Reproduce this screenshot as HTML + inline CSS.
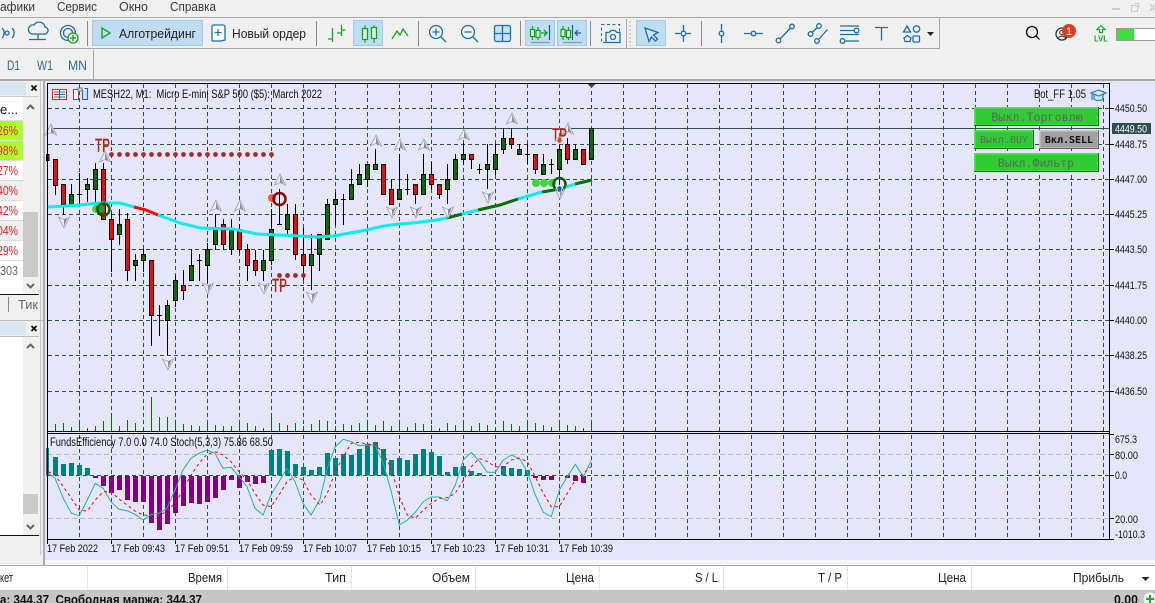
<!DOCTYPE html>
<html><head><meta charset="utf-8"><style>
html,body{margin:0;padding:0;width:1155px;height:603px;overflow:hidden;background:#f0f0f0}
svg{display:block;font-family:"Liberation Sans",sans-serif}
text{white-space:pre}
.m{font-size:13px;fill:#3a3a3a}
.a{font-size:11px;fill:#111}
.t{font-size:11px;fill:#111}
.h{font-size:13px;fill:#222;text-anchor:end}
.r{font-size:13px;fill:#f02020}
.tp{font-weight:bold;font-size:19px;fill:#a52a2a;stroke:#e8d8a8;stroke-width:.3px}
.b{font-family:"DejaVu Sans Mono",monospace;fill:#5c6a5c;text-anchor:middle}
.ic{fill:none;stroke:#1c6fa8;stroke-width:1.3}
</style></head><body>
<svg width="1155" height="603" viewBox="0 0 1155 603" xmlns="http://www.w3.org/2000/svg">
<defs>
<g id="au"><path d="M0-6L5.500 5 0 2.500-5.500 5Z" fill="#eeeef6" stroke="#a8a8b2" stroke-width=".9"/><path d="M0-4V2.500L3.500 3.800Z" fill="#8a8a94"/></g>
<g id="ad"><path d="M0 6L5.500-5 0-2.500-5.500-5Z" fill="#eeeef6" stroke="#a8a8b2" stroke-width=".9"/><path d="M0 4V-2.500L3.500-3.800Z" fill="#8a8a94"/></g>
</defs>
<rect width="1155" height="603" fill="#f0f0f0"/>

<!-- menu -->
<text class="m" x="0" y="11" textLength="35" lengthAdjust="spacingAndGlyphs">афики</text>
<text class="m" x="57" y="11" textLength="40" lengthAdjust="spacingAndGlyphs">Сервис</text>
<text class="m" x="119" y="11" textLength="29" lengthAdjust="spacingAndGlyphs">Окно</text>
<text class="m" x="170" y="11" textLength="46" lengthAdjust="spacingAndGlyphs">Справка</text>
<path d="M1112 9h8" stroke="#ccc" stroke-width="2"/>
<path d="M1131.500 5.500h6v6h-6zM1134 3.500h5v5" fill="none" stroke="#ccc"/>
<path d="M1150 4l5 7m0-7l-5 7" stroke="#ccc" stroke-width="1.500"/>
<rect x="0" y="17" width="1155" height="1" fill="#a8a8a8"/>
<rect x="0" y="48" width="939" height="1" fill="#a8a8a8"/>
<rect x="939" y="18" width="1" height="31" fill="#a8a8a8"/>

<!-- toolbar left -->
<g class="ic">
<path d="M2 28a7 7 0 0 1 0 10M12 28a7 7 0 0 1 0 10"/><circle cx="7" cy="33" r="2"/>
<path d="M32 34h12a3.500 3.500 0 0 0 1-7 6 6 0 0 0-11-2 4.500 4.500 0 0 0-2 9zM38 34v5M29 39.500h17"/>
<circle cx="68" cy="33" r="7.500"/><circle cx="68" cy="33" r="4.500"/>
</g>
<circle cx="73" cy="38" r="5" fill="#dff5df" stroke="#1a9a2c" stroke-width="1.300"/>
<path d="M70 38h6M73 35v6" stroke="#1a9a2c" stroke-width="1.300"/>
<rect x="87" y="21" width="1" height="25" fill="#8a8a8a"/>
<rect x="92.500" y="20.500" width="110" height="25" fill="#bfdcf3" stroke="#9acbf2"/>
<path d="M102 28l8 5-8 5z" fill="none" stroke="#1aa52c" stroke-width="1.400"/>
<text class="m" x="119" y="38" textLength="77" lengthAdjust="spacingAndGlyphs" style="fill:#222">Алготрейдинг</text>
<path d="M213 25h10a2 2 0 0 1 2 2v13l-4 1h-8a1 1 0 0 1-1-1V26z" fill="#fff" stroke="#1c6fa8" stroke-width="1.300"/>
<path d="M218 29v7M214.500 32.500h7" stroke="#1c6fa8" stroke-width="1.200"/>
<text class="m" x="232" y="38" textLength="74" lengthAdjust="spacingAndGlyphs" style="fill:#222">Новый ордер</text>
<rect x="316" y="21" width="1" height="25" fill="#8a8a8a"/>
<path d="M332.500 28V42M328 39h4.500M341.500 25v11M341.500 30h4M337 33h4" fill="none" stroke="#12a81e" stroke-width="1.300"/>
<rect x="353.500" y="20.500" width="29" height="25" fill="#bfdcf3" stroke="#9acbf2"/>
<path d="M365 25v18M374 25v18" stroke="#0aa51a"/>
<rect x="362.500" y="28.500" width="5" height="11" fill="#dff2e0" stroke="#0aa51a" stroke-width="1.300"/>
<rect x="371.500" y="27.500" width="5" height="11" fill="#dff2e0" stroke="#0aa51a" stroke-width="1.300"/>
<path d="M392 39l5-8 3 4 3-6 5 7" fill="none" stroke="#12a81e" stroke-width="1.300"/>
<rect x="418" y="21" width="1" height="25" fill="#8a8a8a"/>
<g class="ic">
<circle cx="436" cy="32" r="6.500"/><path d="M441 37l5 5M432.500 32h7M436 28.500v7"/>
<circle cx="468" cy="32" r="6.500"/><path d="M473 37l5 5M464.500 32h7"/>
<rect x="494.500" y="25.500" width="16" height="16" rx="2" fill="#c5e2f8"/><path d="M502.500 25.500v16M494.500 33.500h16"/>
</g>
<rect x="520" y="21" width="1" height="25" fill="#8a8a8a"/>
<rect x="525.500" y="20.500" width="29" height="25" fill="#bfdcf3" stroke="#9acbf2"/>
<rect x="557.500" y="20.500" width="29" height="25" fill="#bfdcf3" stroke="#9acbf2"/>
<g fill="none" stroke="#0aa51a" stroke-width="1.200">
<path d="M532.500 26v14M538 27v13M563 26v14M568.500 27v13"/>
<rect x="530.500" y="29.500" width="4" height="7" fill="#dff2e0"/><rect x="536" y="30.500" width="4" height="7" fill="#dff2e0"/>
<rect x="561" y="29.500" width="4" height="7" fill="#dff2e0"/><rect x="566.500" y="30.500" width="4" height="7" fill="#dff2e0"/>
<path d="M541 33h6m-3-3l3 3-3 3" stroke-width="1.300"/>
</g>
<path d="M549.500 25v15M572.500 25v15M581 33h-6m3-3l-3 3 3 3" fill="none" stroke="#1c5c90" stroke-width="1.200"/>
<path d="M531 42.500h19M563 42.500h19" stroke="#8a9aa8" stroke-width="1.200"/>
<rect x="590" y="21" width="1" height="25" fill="#8a8a8a"/>
<rect x="601.500" y="24.500" width="18" height="18" fill="none" stroke="#1c6fa8" stroke-dasharray="3 2.500"/>
<path d="M606 32.500h3l2-2h4l2 2h3v10h-14z" fill="#f0f0f0" stroke="#1c6fa8" stroke-width="1.300"/>
<circle cx="613" cy="37" r="2.500" fill="none" stroke="#1c6fa8" stroke-width="1.300"/>
<rect x="626" y="19" width="1" height="29" fill="#a8a8a8"/>
<path d="M630 21v25" stroke="#ccc" stroke-width="2" stroke-dasharray="2 2"/>
<rect x="636.500" y="20.500" width="29" height="25" fill="#bfdcf3" stroke="#9acbf2"/>
<path d="M645 28l13 4.500-4.500 2.500 4 4-2 2-4-4-2.500 4.500z" fill="#cfe4f6" stroke="#1c6fa8" stroke-width="1.300"/>
<g class="ic">
<path d="M675 33.500h5.500M685.500 33.500h5.500M683.500 25v6M683.500 36v6"/><circle cx="683.500" cy="33.500" r="2.300"/>
<path d="M721.500 24v7M721.500 36v7"/><circle cx="721.500" cy="33.500" r="2.300"/>
<path d="M744 33.500h7M756 33.500h7"/><circle cx="753.500" cy="33.500" r="2.300"/>
<circle cx="778.500" cy="40.500" r="2.300"/><circle cx="792" cy="26.500" r="2.300"/><path d="M780 39l10.500-11"/>
<circle cx="810.500" cy="34" r="2.300"/><circle cx="819" cy="26" r="2.300"/><circle cx="817" cy="41" r="2.300"/>
<path d="M812 32.500l5.500-5M819 39l8.500-9.500"/>
<path d="M840 26h19M840 30.500h14M840 34.500h19M845 41h14"/><circle cx="856.500" cy="30.500" r="2.300"/><circle cx="842.500" cy="41" r="2.300"/>
<path d="M875 27.500h13M881.500 27.500v13"/>
<path d="M907 26l3.500 6h-7z"/><circle cx="916.500" cy="29" r="3.200"/><path d="M904 38l3.500-2.500 3.500 2.500-1 3.500h-5z"/><rect x="913" y="36" width="6.500" height="6" rx="1"/>
</g>
<rect x="701" y="21" width="1" height="25" fill="#8a8a8a"/>
<path d="M927 32h7l-3.500 4z" fill="#222"/>
<!-- right icons -->
<circle cx="1032" cy="32" r="5.500" fill="none" stroke="#111" stroke-width="1.300"/><path d="M1036 36l3.500 3.500" stroke="#111" stroke-width="1.400"/>
<circle cx="1062" cy="34" r="6" fill="none" stroke="#333" stroke-width="1.300"/><circle cx="1062" cy="32.500" r="2.300" fill="none" stroke="#333"/><path d="M1058 38.500c1-3 7-3 8 0" fill="none" stroke="#333"/>
<circle cx="1069" cy="31" r="7" fill="#e5391f"/>
<text x="1069" y="35" font-size="11" fill="#fff" text-anchor="middle">1</text>
<path d="M1101 25.500l4 4h-2.500v3h-3v-3H1097z" fill="#fff" stroke="#15a52c" stroke-width="1.200"/>
<text x="1094" y="41.500" font-size="8" font-weight="bold" fill="#15a52c" textLength="14" lengthAdjust="spacingAndGlyphs">LVL</text>
<rect x="1116.500" y="28.500" width="42" height="12" fill="#fff" stroke="#999"/>
<rect x="1117" y="29" width="17" height="11" fill="#3fdd3f"/>

<!-- period row -->
<g font-size="14" fill="#2a6ea5"><text x="7" y="70" textLength="13" lengthAdjust="spacingAndGlyphs">D1</text><text x="37" y="70" textLength="16" lengthAdjust="spacingAndGlyphs">W1</text><text x="68" y="70" textLength="19" lengthAdjust="spacingAndGlyphs">MN</text></g>
<rect x="93" y="50" width="1" height="30" fill="#a8a8a8"/>

<!-- left panels -->
<rect x="0" y="79" width="1155" height="2" fill="#a8a8a8"/>
<rect x="0" y="81" width="45" height="484" fill="#f0f0f0"/>
<rect x="40" y="81" width="1" height="474" fill="#c4c4c4"/>
<rect x="43" y="81" width="2" height="484" fill="#aaa"/>
<rect x="0" y="82" width="26" height="13" fill="#d9e6f1"/>
<path d="M31.500 85.500l5 5m0-5l-5 5" stroke="#111" stroke-width="1.800"/>
<rect x="0" y="96" width="39" height="1" fill="#ccc"/>
<rect x="0" y="97" width="23" height="197" fill="#fff"/>
<text style="font-size:13px;fill:#111" x="0" y="114">е...</text>
<rect x="0" y="121" width="23" height="19" fill="#adff2f"/>
<rect x="0" y="141" width="23" height="19" fill="#adff2f"/>
<rect x="0" y="181" width="23" height="19" fill="#eee"/>
<rect x="0" y="221" width="23" height="19" fill="#eee"/>
<path d="M0 120.500h23M0 140.500h23M0 160.500h23M0 180.500h23M0 200.500h23M0 220.500h23M0 240.500h23M0 260.500h23" stroke="#ddd"/>
<text class="r" x="-3" y="135" textLength="21" lengthAdjust="spacingAndGlyphs">26%</text><text class="r" x="-3" y="155" textLength="21" lengthAdjust="spacingAndGlyphs">98%</text><text class="r" x="-3" y="175" textLength="21" lengthAdjust="spacingAndGlyphs">27%</text><text class="r" x="-3" y="195" textLength="21" lengthAdjust="spacingAndGlyphs">40%</text><text class="r" x="-3" y="215" textLength="21" lengthAdjust="spacingAndGlyphs">42%</text><text class="r" x="-3" y="235" textLength="21" lengthAdjust="spacingAndGlyphs">04%</text><text class="r" x="-3" y="255" textLength="21" lengthAdjust="spacingAndGlyphs">29%</text>
<text x="0" y="275" style="font-size:13px;fill:#666" textLength="18" lengthAdjust="spacingAndGlyphs">303</text>
<rect x="23" y="212" width="15" height="65" fill="#cacaca"/>
<path d="M27 109l3.500-3.500 3.500 3.500M27 284l3.500 3.500 3.500-3.500" fill="none" stroke="#666" stroke-width="2"/>
<rect x="0" y="294" width="39" height="1" fill="#111"/>
<rect x="8" y="297" width="1" height="15" fill="#888"/>
<text x="18" y="309" style="font-size:13px;fill:#667" textLength="20" lengthAdjust="spacingAndGlyphs">Тик</text>
<rect x="0" y="320" width="43" height="1" fill="#bbb"/>
<rect x="0" y="322" width="26" height="13" fill="#d9e6f1"/>
<path d="M31.500 326l5 5m0-5l-5 5" stroke="#111" stroke-width="1.800"/>
<rect x="0" y="336" width="39" height="1" fill="#bbb"/>
<rect x="0" y="337" width="23" height="198" fill="#fff"/>
<rect x="23" y="494" width="15" height="20" fill="#cacaca"/>
<path d="M27 348l3.500-3.500 3.500 3.500M27 525l3.500 3.500 3.500-3.500" fill="none" stroke="#666" stroke-width="2"/>
<rect x="0" y="535" width="39" height="1" fill="#111"/>

<!-- chart background -->
<rect x="45" y="81" width="1110" height="479" fill="#e6e6fa"/>
<rect x="45" y="560" width="1110" height="5" fill="#f5f5f5"/>

<!-- grid -->
<g fill="none" stroke="#2f4f4f" stroke-dasharray="4 3">
<path d="M48 108.500H1109M48 144.500H1109M48 179.500H1109M48 214.500H1109M48 249.500H1109M48 285.500H1109M48 320.500H1109M48 355.500H1109M48 391.500H1109M48 475.500H1109"/>
<path d="M79.500 84V431M111.500 84V431M143.500 84V431M175.500 84V431M207.500 84V431M239.500 84V431M271.500 84V431M303.500 84V431M335.500 84V431M367.500 84V431M399.500 84V431M431.500 84V431M463.500 84V431M495.500 84V431M527.500 84V431M559.500 84V431M591.500 84V431M623.500 84V431M655.500 84V431M687.500 84V431M719.500 84V431M751.500 84V431M783.500 84V431M815.500 84V431M847.500 84V431M879.500 84V431M911.500 84V431M943.500 84V431M975.500 84V431M1007.500 84V431M1039.500 84V431M1071.500 84V431M1103.500 84V431"/>
<path d="M79.500 435V539M111.500 435V539M143.500 435V539M175.500 435V539M207.500 435V539M239.500 435V539M271.500 435V539M303.500 435V539M335.500 435V539M367.500 435V539M399.500 435V539M431.500 435V539M463.500 435V539M495.500 435V539M527.500 435V539M559.500 435V539M591.500 435V539M623.500 435V539M655.500 435V539M687.500 435V539M719.500 435V539M751.500 435V539M783.500 435V539M815.500 435V539M847.500 435V539M879.500 435V539M911.500 435V539M943.500 435V539M975.500 435V539M1007.500 435V539M1039.500 435V539M1071.500 435V539M1103.500 435V539"/>
</g>
<path d="M48 454.500H1109M48 518.500H1109" stroke="#bcbcbc" stroke-dasharray="5 3" fill="none"/>
<path d="M48 128.500H1109" stroke="#2f4f4f"/>

<!-- volumes -->
<path stroke="#007000" fill="none" d="M55.500 431V424M63.500 431V423M71.500 431V427M79.500 431V424M87.500 431V428M95.500 431V426M103.500 431V421M111.500 431V413M119.500 431V426M127.500 431V420M135.500 431V423M143.500 431V427M151.500 431V397M159.500 431V417M167.500 431V417M175.500 431V420M183.500 431V424M191.500 431V425M199.500 431V426M207.500 431V423M215.500 431V425M223.500 431V426M231.500 431V426M239.500 431V423M247.500 431V423M255.500 431V426M263.500 431V428M271.500 431V417M279.500 431V423M287.500 431V425M295.500 431V423M303.500 431V426M311.500 431V424M319.500 431V420M327.500 431V421M335.500 431V426M343.500 431V424M351.500 431V425M359.500 431V423M367.500 431V421M375.500 431V425M383.500 431V421M391.500 431V426M399.500 431V423M407.500 431V427M415.500 431V423M423.500 431V424M431.500 431V425M439.500 431V428M447.500 431V423M455.500 431V425M463.500 431V421M471.500 431V426M479.500 431V423M487.500 431V425M495.500 431V427M503.500 431V421M511.500 431V424M519.500 431V426M527.500 431V424M535.500 431V423M543.500 431V425M551.500 431V427M559.500 431V421M567.500 431V425M575.500 431V426M583.500 431V428M591.500 431V422"/>

<!-- wicks -->
<path stroke="#000" fill="none" d="M55.500 159V195M63.500 184V215M71.500 184V204M79.500 173V205M77 194.500h5M87.500 178V202M95.500 163V202M103.500 163V220M111.500 213V272M119.500 209V245M127.500 213V281M135.500 254V281M143.500 249V272M151.500 260V346M159.500 305V336M157 315.500h5M167.500 300V355M175.500 275V307M183.500 270V300M191.500 249V280M199.500 254V281M197 260.500h5M207.500 243V283M215.500 214V250M223.500 219V250M231.500 219V255M239.500 224V253M247.500 244V281M255.500 250V276M263.500 250V281M271.500 209V265M279.500 189V224M277 224.500h5M287.500 204V235M295.500 204V260M303.500 228V280M311.500 234V290M319.500 234V271M327.500 199V239M335.500 192V225M343.500 194V225M341 199.500h5M351.500 169V199M359.500 164V184M367.500 164V187M375.500 149V169M391.500 179V204M399.500 154V199M407.500 174V195M405 189.500h5M415.500 184V204M423.500 154V194M431.500 162V189M439.500 184V199M447.500 164V204M455.500 154V179M463.500 143V165M471.500 154V169M479.500 164V174M477 169.500h5M487.500 144V189M495.500 144V175M503.500 128V154M511.500 128V149M519.500 144V154M527.500 144V164M525 154.500h5M535.500 154V174M543.500 154V174M551.500 159V174M549 164.500h5M559.500 144V190M567.500 138V164M575.500 144V159"/>
<!-- green bodies -->
<path fill="#006f00" stroke="#000" d="M69.500 194.500h4v10h-4zM85.500 184.500h4v5h-4zM93.500 169.500h4v20h-4zM117.500 224.500h4v10h-4zM133.500 260.500h4v5h-4zM141.500 254.500h4v6h-4zM165.500 305.500h4v15h-4zM173.500 280.500h4v20h-4zM189.500 265.500h4v15h-4zM205.500 249.500h4v16h-4zM213.500 229.500h4v15h-4zM229.500 229.500h4v20h-4zM261.500 260.500h4v10h-4zM269.500 229.500h4v31h-4zM285.500 214.500h4v15h-4zM309.500 254.500h4v11h-4zM317.500 234.500h4v20h-4zM325.500 204.500h4v35h-4zM333.500 199.500h4v5h-4zM349.500 184.500h4v15h-4zM357.500 174.500h4v10h-4zM365.500 164.500h4v15h-4zM373.500 164.500h4v5h-4zM397.500 189.500h4v10h-4zM421.500 174.500h4v20h-4zM445.500 179.500h4v10h-4zM453.500 159.500h4v20h-4zM461.500 154.500h4v5h-4zM485.500 164.500h4v5h-4zM493.500 154.500h4v15h-4zM501.500 138.500h4v11h-4zM517.500 149.500h4v5h-4zM541.500 164.500h4v10h-4zM557.500 149.500h4v20h-4zM573.500 149.500h4v10h-4zM589.500 128.500h4v31h-4z"/>
<!-- red bodies -->
<path fill="#f00" stroke="#000" d="M46.500 154.500h2.500v6h-2.500zM53.500 159.500h4v26h-4zM61.500 184.500h4v20h-4zM101.500 169.500h4v50h-4zM109.500 219.500h4v20h-4zM125.500 219.500h4v51h-4zM149.500 260.500h4v55h-4zM181.500 285.500h4v5h-4zM221.500 224.500h4v20h-4zM237.500 229.500h4v20h-4zM245.500 249.500h4v16h-4zM253.500 260.500h4v10h-4zM293.500 214.500h4v40h-4zM301.500 254.500h4v11h-4zM381.500 164.500h4v30h-4zM389.500 189.500h4v15h-4zM413.500 184.500h4v10h-4zM429.500 174.500h4v10h-4zM437.500 184.500h4v10h-4zM469.500 154.500h4v5h-4zM509.500 138.500h4v6h-4zM533.500 154.500h4v15h-4zM565.500 144.500h4v15h-4zM581.500 149.500h4v15h-4z"/>

<!-- moving average -->
<g fill="none" stroke-width="3">
<path stroke="#00eeee" d="M48 207L65 206 80 205 100 203 120 203 134 207M158 215L180 223 200 228 233 229 257 234 300 236 317 237 333 236 350 233 367 230 383 226 400 224 417 222.500 433 220.500 447 218M462 214L478 210M518 199L542 192M560 189L575 184"/>
<path stroke="#f00" d="M134 207L146 210 158 215"/>
<path stroke="#007000" d="M447 218L462 214M478 210L500 205 518 199M542 192L560 189M575 184L592 180"/>
</g>

<!-- arrows -->
<use href="#au" x="105" y="157"/><use href="#au" x="216" y="206"/><use href="#au" x="240" y="206"/><use href="#au" x="280" y="180"/><use href="#au" x="51" y="130"/><use href="#au" x="376" y="141"/><use href="#au" x="400" y="145"/><use href="#au" x="424" y="145"/><use href="#au" x="464" y="135"/><use href="#au" x="512" y="119"/><use href="#au" x="568" y="129"/>
<use href="#ad" x="64" y="222"/><use href="#ad" x="208" y="288"/><use href="#ad" x="264" y="288"/><use href="#ad" x="168" y="364"/><use href="#ad" x="312" y="297"/><use href="#ad" x="392" y="212"/><use href="#ad" x="416" y="212"/><use href="#ad" x="448" y="212"/><use href="#ad" x="488" y="197"/><use href="#ad" x="560" y="193"/>

<!-- TP dots -->
<g fill="#a52a2a">
<circle cx="111.500" cy="154.500" r="2.400"/><circle cx="119.500" cy="154.500" r="2.400"/><circle cx="127.500" cy="154.500" r="2.400"/><circle cx="135.500" cy="154.500" r="2.400"/><circle cx="143.500" cy="154.500" r="2.400"/><circle cx="151.500" cy="154.500" r="2.400"/><circle cx="159.500" cy="154.500" r="2.400"/><circle cx="167.500" cy="154.500" r="2.400"/><circle cx="175.500" cy="154.500" r="2.400"/><circle cx="183.500" cy="154.500" r="2.400"/><circle cx="191.500" cy="154.500" r="2.400"/><circle cx="199.500" cy="154.500" r="2.400"/><circle cx="207.500" cy="154.500" r="2.400"/><circle cx="215.500" cy="154.500" r="2.400"/><circle cx="223.500" cy="154.500" r="2.400"/><circle cx="231.500" cy="154.500" r="2.400"/><circle cx="239.500" cy="154.500" r="2.400"/><circle cx="247.500" cy="154.500" r="2.400"/><circle cx="255.500" cy="154.500" r="2.400"/><circle cx="263.500" cy="154.500" r="2.400"/><circle cx="271.500" cy="154.500" r="2.400"/>
<circle cx="279.500" cy="275.500" r="2.400"/><circle cx="287.500" cy="275.500" r="2.400"/><circle cx="295.500" cy="275.500" r="2.400"/><circle cx="303.500" cy="275.500" r="2.400"/>
</g>
<text class="tp" x="95" y="152" textLength="15" lengthAdjust="spacingAndGlyphs">TP</text>
<text class="tp" x="272" y="292" textLength="15" lengthAdjust="spacingAndGlyphs">TP</text>
<text class="tp" x="552" y="141.500" textLength="15" lengthAdjust="spacingAndGlyphs">TP</text>

<!-- entry markers -->
<circle cx="96" cy="209" r="4" fill="#5bd02b"/><circle cx="100" cy="209" r="4.500" fill="#2a9a2a"/>
<circle cx="103.500" cy="209.500" r="6" fill="none" stroke="#0b5c0b" stroke-width="2.500"/>
<circle cx="272" cy="198" r="4" fill="#ff5a30"/>
<circle cx="279.500" cy="199" r="6" fill="none" stroke="#8b0000" stroke-width="2.500"/>
<circle cx="536" cy="183" r="4" fill="#3ed63e"/><circle cx="544" cy="183" r="4" fill="#3ed63e"/><circle cx="552" cy="183" r="4" fill="#3ed63e"/>
<circle cx="559.500" cy="184" r="6" fill="none" stroke="#0b5c0b" stroke-width="2.500"/>
<path d="M559.500 185l4 4h-2v3h-4v-3h-2z" fill="#1560b0" stroke="#fff" stroke-width=".6"/>
<path d="M559.500 144l4-4h-2v-3h-4v3h-2z" fill="#f04020" stroke="#fff" stroke-width=".6"/>

<!-- chart header -->
<g fill="none" stroke-width="1.100">
<rect x="52.500" y="89.500" width="14" height="10" fill="#fff" stroke="#d03030"/><path d="M54 92h5M54 94.500h5M54 97h5" stroke="#d03030"/><path d="M60 92h5M60 94.500h5M60 97h5" stroke="#1c6fa8"/><path d="M59.500 89.500v10" stroke="#1c6fa8"/>
<path d="M73.500 89.500h5v10h-5z" fill="#fff" stroke="#d03030"/><path d="M82.500 89.500v10h5v-11h-3" fill="#cfe4f6" stroke="#1c6fa8"/><rect x="78" y="88" width="4" height="3" fill="#ddd" stroke="#888"/>
</g>
<text x="93" y="98" font-size="12" fill="#111" textLength="229" lengthAdjust="spacingAndGlyphs">MESH22, M1:  Micro E-mini S&amp;P 500 ($5): March 2022</text>
<text x="1034" y="98" font-size="12" fill="#111" textLength="52" lengthAdjust="spacingAndGlyphs">Bot_FF 1.05</text>
<path d="M1091 93l7.500-3 7.500 3-7.500 3zM1094 95v4c2 2 7 2 9 0v-4M1092 94v6" fill="#cfe4f6" stroke="#1c7fc8" stroke-width="1.200"/>

<!-- buttons -->
<g>
<rect x="974" y="107" width="125" height="19" fill="#007f00"/><rect x="974" y="107" width="124" height="18" fill="#46ee46"/><rect x="975.500" y="108.500" width="122" height="16" fill="#2ecc32"/>
<text class="b" font-size="11.700" x="1037" y="121">Выкл.Торговлю</text>
<rect x="974" y="130" width="60" height="19" fill="#007f00"/><rect x="974" y="130" width="59" height="18" fill="#46ee46"/><rect x="975.500" y="131.500" width="57" height="16" fill="#2ecc32"/>
<text class="b" font-size="10" x="1004" y="143">Выкл.BUY</text>
<rect x="1039" y="130" width="60" height="19" fill="#666"/><rect x="1039" y="130" width="59" height="18" fill="#c8c8c8"/><rect x="1040.500" y="131.500" width="57" height="16" fill="#a0a0a0"/>
<text font-family="DejaVu Sans Mono" font-weight="bold" font-size="10" x="1069" y="143" text-anchor="middle" fill="#111">Вкл.SELL</text>
<rect x="974" y="153" width="125" height="19" fill="#007f00"/><rect x="974" y="153" width="124" height="18" fill="#46ee46"/><rect x="975.500" y="154.500" width="122" height="16" fill="#2ecc32"/>
<text class="b" font-size="11.500" x="1036" y="167">Выкл.Фильтр</text>
</g>

<!-- histogram -->
<path fill="#008080" d="M46 448h3v27.500h-3zM53 457h5v18.500h-5zM61 464h5v11.500h-5zM69 463h5v12.500h-5zM77 465h5v10.500h-5zM85 468h5v7.500h-5zM269 450h5v25.500h-5zM277 449h5v26.500h-5zM285 451h5v24.500h-5zM293 464h5v11.500h-5zM301 467h5v8.500h-5zM309 470h5v5.500h-5zM317 467h5v8.500h-5zM325 453h5v22.500h-5zM333 458h5v17.500h-5zM341 454h5v21.500h-5zM349 455h5v20.500h-5zM357 449h5v26.500h-5zM365 444h5v31.500h-5zM373 442h5v33.500h-5zM381 449h5v26.500h-5zM389 460h5v15.500h-5zM397 458h5v17.500h-5zM405 460h5v15.500h-5zM413 454h5v21.500h-5zM421 449h5v26.500h-5zM429 452h5v23.500h-5zM437 456h5v19.500h-5zM445 472h5v3.500h-5zM453 467h5v8.500h-5zM461 466h5v9.500h-5zM469 471h5v4.500h-5zM477 473h5v2.500h-5zM501 466h5v9.500h-5zM509 468h5v7.500h-5zM517 469h5v6.500h-5zM525 470h5v5.500h-5z"/>
<path fill="#800080" d="M93 476h5v2h-5zM101 476h5v10h-5zM109 476h5v17h-5zM117 476h5v14h-5zM125 476h5v24h-5zM133 476h5v26h-5zM141 476h5v26h-5zM149 476h5v47h-5zM157 476h5v54h-5zM165 476h5v48h-5zM173 476h5v37h-5zM181 476h5v30h-5zM189 476h5v27h-5zM197 476h5v28h-5zM205 476h5v26h-5zM213 476h5v22h-5zM221 476h5v14h-5zM229 476h5v4h-5zM237 476h5v12h-5zM245 476h5v6h-5zM253 476h5v8h-5zM261 476h5v7h-5zM533 476h5v2h-5zM541 476h5v4h-5zM549 476h5v4h-5zM565 476h5v2h-5zM573 476h5v5h-5zM581 476h5v7h-5z"/>

<!-- stochastic -->
<g fill="none">
<polyline stroke="#20b2aa" points="48.300,473.300 55,478.300 63.300,498.300 71.300,513.300 79.300,515.700 87.300,500 95.300,483.300 103.300,488.300 111,501.700 119,509.300 127,510.700 135,514.300 143.300,520 151,514.300 159,513.300 167,508.300 175,490 183,470 191,458.300 199,453.300 207,450 215,453.300 223,468.300 231,467.300 239,476.700 247,486.700 255,508.300 263,515 271,495 279,481.700 287,468.300 295,481.700 303,503.300 311,515 320,499.300 327.300,468.300 335.300,446.700 343.300,439.300 351.300,441.700 359.300,445.700 367.300,445 375.300,445 383.300,463.300 391.300,491.700 399.300,525 407.300,520 415.300,512.300 423.300,501.700 431.300,497 439.300,497 447.300,500.700 455.300,485 463.300,460 471.300,452.300 479.300,461 487.300,472.300 495.300,472.300 503.300,460 511.300,455 519.300,458.300 527.300,471.700 535.300,495 543.300,512.300 551.300,516.700 559.300,490 567.300,476.700 575.300,464.300 583.300,476.700 591.300,460.700"/>
<polyline stroke="#f00" stroke-dasharray="3 3" points="48.300,471.700 55,475 63.300,486.700 71.300,498.300 79.300,510 87.300,511 95.300,500 103.300,491.700 111,491.700 119,499 127,505 135,511 143.300,515 151,515.700 159,515.700 167,511 175,503.300 183,490 191,475 199,463.300 207,454.300 215,451.700 223,455 231,461.700 239,471.700 247,480 255,493.300 263,505 271,506.700 279,495 287,481.700 295,476.700 303,480 311,495 320,505 327.300,493.300 335.300,471.700 343.300,456.700 351.300,443.300 359.300,442.300 367.300,444.300 375.300,444.300 383.300,453.300 391.300,468.300 399.300,496.700 407.300,515 415.300,518.300 423.300,510 431.300,503.300 439.300,498.300 447.300,497.700 455.300,493.300 463.300,480 471.300,466.700 479.300,458.300 487.300,461.700 495.300,466.700 503.300,466.700 511.300,460 519.300,458.300 527.300,461.700 535.300,476.700 543.300,493.300 551.300,506.700 559.300,506.700 567.300,493.300 575.300,480 583.300,473.300 591.300,466.700"/>
</g>
<text x="50" y="446" font-size="11.500" fill="#111" textLength="223" lengthAdjust="spacingAndGlyphs">FundsEfficiency 7.0 0.0 74.0 Stoch(5,3,3) 75.86 68.50</text>

<!-- frame -->
<rect x="47" y="83" width="1062" height="1" fill="#000"/>
<rect x="47" y="83" width="1" height="457" fill="#000"/>
<rect x="1109" y="83" width="1" height="457" fill="#000"/>
<rect x="47" y="431" width="1063" height="1" fill="#000"/>
<rect x="47" y="433" width="1063" height="1" fill="#000"/>
<rect x="47" y="539" width="1063" height="1" fill="#000"/>
<path d="M587.500 84h8l-4 4z" fill="#2f4f4f"/>

<!-- price axis -->
<path d="M1110 108.500h4M1110 144.500h4M1110 179.500h4M1110 214.500h4M1110 249.500h4M1110 285.500h4M1110 320.500h4M1110 355.500h4M1110 391.500h4M1110 434.500h4M1110 454.500h4M1110 475.500h4M1110 518.500h4M1110 539.500h4" stroke="#000"/>
<text class="a" x="1115" y="112" textLength="32" lengthAdjust="spacingAndGlyphs">4450.50</text>
<rect x="1112" y="123" width="39" height="11" fill="#2f4f4f"/>
<text x="1115" y="132.500" font-size="11" fill="#fff" textLength="32" lengthAdjust="spacingAndGlyphs">4449.50</text>
<text class="a" x="1115" y="148" textLength="32" lengthAdjust="spacingAndGlyphs">4448.75</text>
<text class="a" x="1115" y="183" textLength="32" lengthAdjust="spacingAndGlyphs">4447.00</text>
<text class="a" x="1115" y="218" textLength="32" lengthAdjust="spacingAndGlyphs">4445.25</text>
<text class="a" x="1115" y="253" textLength="32" lengthAdjust="spacingAndGlyphs">4443.50</text>
<text class="a" x="1115" y="289" textLength="32" lengthAdjust="spacingAndGlyphs">4441.75</text>
<text class="a" x="1115" y="324" textLength="32" lengthAdjust="spacingAndGlyphs">4440.00</text>
<text class="a" x="1115" y="359" textLength="32" lengthAdjust="spacingAndGlyphs">4438.25</text>
<text class="a" x="1115" y="395" textLength="32" lengthAdjust="spacingAndGlyphs">4436.50</text>
<text class="a" x="1115" y="443" textLength="22" lengthAdjust="spacingAndGlyphs">675.3</text>
<text class="a" x="1115" y="459" textLength="23" lengthAdjust="spacingAndGlyphs">80.00</text>
<text class="a" x="1115" y="479" textLength="12" lengthAdjust="spacingAndGlyphs">0.0</text>
<text class="a" x="1115" y="523" textLength="23" lengthAdjust="spacingAndGlyphs">20.00</text>
<text class="a" x="1115" y="538" textLength="30" lengthAdjust="spacingAndGlyphs">-1010.3</text>

<!-- time axis -->
<path d="M47.500 540v4M111.500 540v4M175.500 540v4M239.500 540v4M303.500 540v4M367.500 540v4M431.500 540v4M495.500 540v4M559.500 540v4" stroke="#000"/>
<text class="t" x="47" y="552" textLength="51" lengthAdjust="spacingAndGlyphs">17 Feb 2022</text>
<text class="t" x="111" y="552" textLength="54" lengthAdjust="spacingAndGlyphs">17 Feb 09:43</text>
<text class="t" x="175" y="552" textLength="54" lengthAdjust="spacingAndGlyphs">17 Feb 09:51</text>
<text class="t" x="239" y="552" textLength="54" lengthAdjust="spacingAndGlyphs">17 Feb 09:59</text>
<text class="t" x="303" y="552" textLength="54" lengthAdjust="spacingAndGlyphs">17 Feb 10:07</text>
<text class="t" x="367" y="552" textLength="54" lengthAdjust="spacingAndGlyphs">17 Feb 10:15</text>
<text class="t" x="431" y="552" textLength="54" lengthAdjust="spacingAndGlyphs">17 Feb 10:23</text>
<text class="t" x="495" y="552" textLength="54" lengthAdjust="spacingAndGlyphs">17 Feb 10:31</text>
<text class="t" x="559" y="552" textLength="54" lengthAdjust="spacingAndGlyphs">17 Feb 10:39</text>

<!-- table header -->
<rect x="0" y="565" width="1155" height="1" fill="#a8a8a8"/>
<rect x="0" y="566" width="1155" height="24" fill="#fff"/>
<path d="M87.500 566v24M227.500 566v24M351.500 566v24M475.500 566v24M599.500 566v24M723.500 566v24M847.500 566v24M971.500 566v24" stroke="#e4e4e4"/>
<text style="font-size:13px;fill:#222" x="0" y="582" textLength="13" lengthAdjust="spacingAndGlyphs">кет</text>
<text class="h" x="222" y="582" textLength="34" lengthAdjust="spacingAndGlyphs">Время</text><text class="h" x="346" y="582" textLength="21" lengthAdjust="spacingAndGlyphs">Тип</text><text class="h" x="470" y="582" textLength="38" lengthAdjust="spacingAndGlyphs">Объем</text><text class="h" x="594" y="582" textLength="28" lengthAdjust="spacingAndGlyphs">Цена</text><text class="h" x="718" y="582" textLength="23" lengthAdjust="spacingAndGlyphs">S / L</text><text class="h" x="842" y="582" textLength="24" lengthAdjust="spacingAndGlyphs">T / P</text><text class="h" x="966" y="582" textLength="28" lengthAdjust="spacingAndGlyphs">Цена</text><text class="h" x="1124" y="582" textLength="51" lengthAdjust="spacingAndGlyphs">Прибыль</text>
<path d="M1141.500 577h8l-4 4z" fill="#222"/>

<!-- status bar -->
<rect x="0" y="590" width="1155" height="13" fill="#c6c6c6"/>
<text x="0" y="604" font-size="13" font-weight="bold" fill="#111" textLength="202" lengthAdjust="spacingAndGlyphs">а: 344.37  Свободная маржа: 344.37</text>
<text x="1114" y="604" font-size="13" font-weight="bold" fill="#111" textLength="24" lengthAdjust="spacingAndGlyphs">0.00</text>
<circle cx="1150" cy="599" r="6.500" fill="#eef5ee"/>
<path d="M1146 599h8M1150 595v8" stroke="#2aa52a" stroke-width="2"/>
</svg>
</body></html>
